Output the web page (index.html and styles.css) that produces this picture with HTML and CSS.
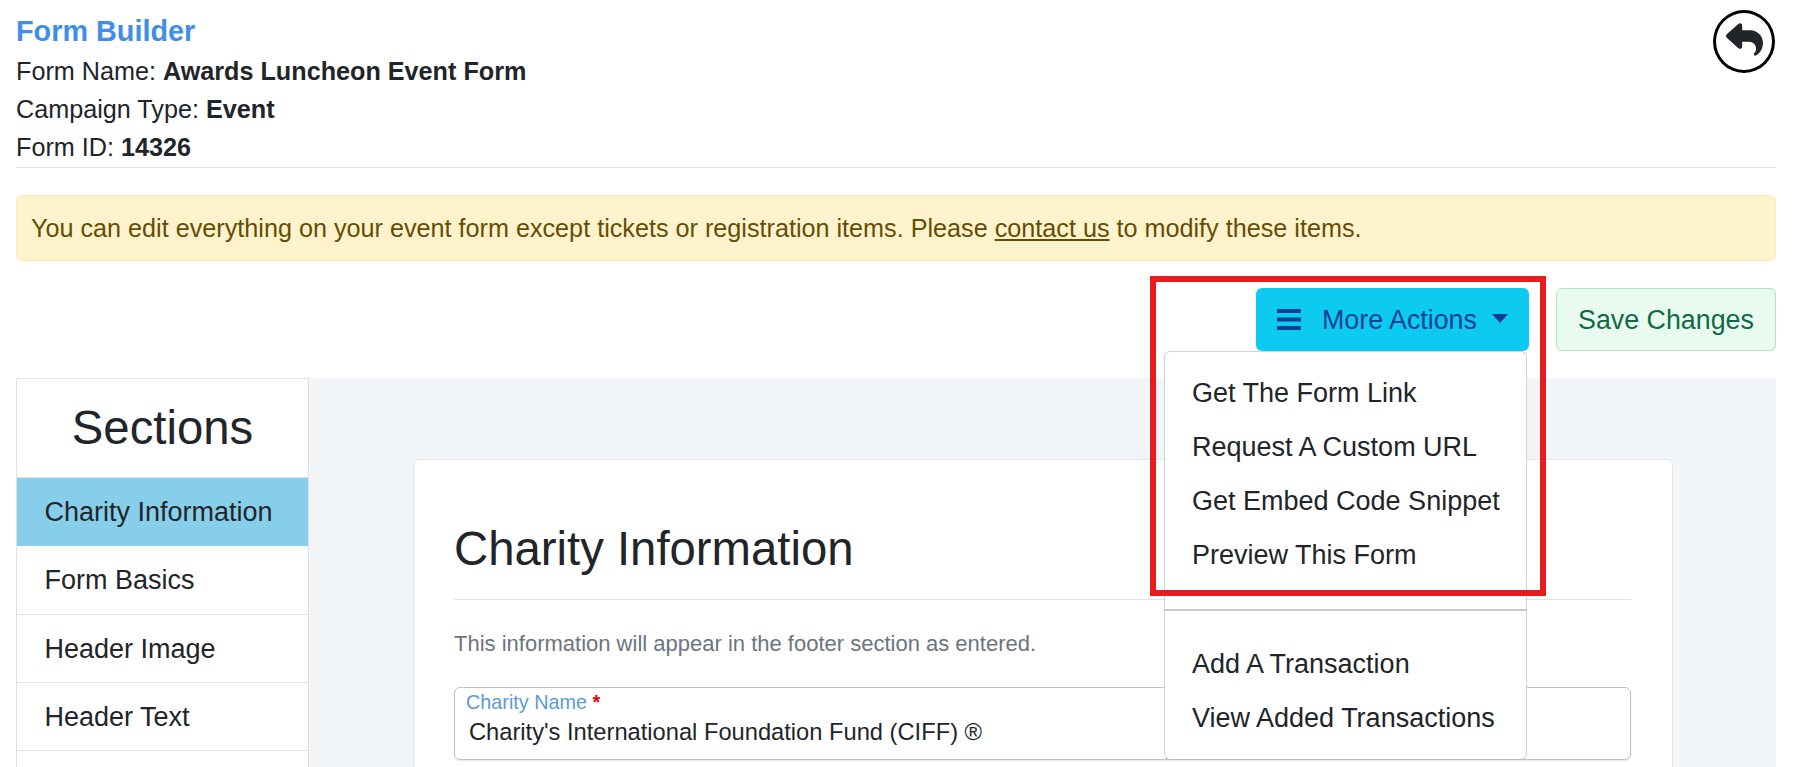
FILE: index.html
```html
<!DOCTYPE html>
<html lang="en">
<head>
    <meta charset="UTF-8">
    <meta name="viewport" content="width=device-width, initial-scale=1.0">
    <title>Form Builder</title>
    <link rel="stylesheet" href="styles.css">
</head>
<body>

<div class="page">
    <header class="form-header">
        <div class="form-info">
            <h1>Form Builder</h1>
            <p>Form Name: <strong>Awards Luncheon Event Form</strong></p>
            <p>Campaign Type: <strong>Event</strong></p>
            <p>Form ID: <strong>14326</strong></p>
        </div>
        <a class="back-link" href="#" aria-label="Back">
            <svg viewBox="0 0 512 512" width="37" height="37"><path d="M205 34.8c11.5 5.1 19 16.6 19 29.2v64H336c97.2 0 176 78.8 176 176c0 113.3-81.5 163.9-100.2 174.1c-2.5 1.4-5.3 1.9-8.1 1.9c-10.9 0-19.7-8.9-19.7-19.7c0-7.5 4.3-14.4 9.8-19.5c9.4-8.8 22.2-26.4 22.2-56.7c0-53-43-96-96-96H224v64c0 12.6-7.4 24.1-19 29.2s-25 3-34.4-5.4l-160-144C3.9 225.7 0 217.1 0 208s3.9-17.7 10.6-23.8l160-144c9.4-8.5 22.9-10.6 34.4-5.4z"/></svg>
        </a>
    </header>

    <div class="alert">You can edit everything on your event form except tickets or registration items. Please <a href="#">contact us</a> to modify these items.</div>

    <div class="actions">
        <div class="dropdown">
            <button class="btn-more">
                <svg class="bars" viewBox="0 0 24 21" width="24" height="21"><rect width="24" height="4" y="0"/><rect width="24" height="4" y="8.5"/><rect width="24" height="4" y="17"/></svg>
                <span>More Actions</span>
                <span class="caret"></span>
            </button>
            <div class="menu">
                <a href="#">Get The Form Link</a>
                <a href="#">Request A Custom URL</a>
                <a href="#">Get Embed Code Snippet</a>
                <a href="#">Preview This Form</a>
                <hr>
                <a href="#">Add A Transaction</a>
                <a href="#">View Added Transactions</a>
            </div>
            <div class="highlight"></div>
        </div>
        <button class="btn-save">Save Changes</button>
    </div>

    <div class="builder">
        <nav class="sidebar">
            <h2>Sections</h2>
            <a class="active" href="#">Charity Information</a>
            <a href="#">Form Basics</a>
            <a href="#">Header Image</a>
            <a href="#">Header Text</a>
        </nav>
        <main class="panel">
            <section class="card">
                <h2>Charity Information</h2>
                <p class="hint">This information will appear in the footer section as entered.</p>
                <div class="field">
                    <label for="charityName">Charity Name <span>*</span></label>
                    <input id="charityName" type="text" value="Charity's International Foundation Fund (CIFF) ®">
                </div>
            </section>
        </main>
    </div>
</div>

</body>
</html>
```

FILE: styles.css
```css
html, body {
    margin: 0;
    height: 100%;
    overflow: hidden;
}
body {
    font-family: "Liberation Sans", Arial, sans-serif;
    color: #212529;
    background-color: #fff;
}
a {
    color: inherit;
    text-decoration: none;
}
.page {
    display: flex;
    flex-direction: column;
    height: 100%;
    padding: 10px 19px 0 16px;
    box-sizing: border-box;
}

/* header */
.form-header {
    display: flex;
    justify-content: space-between;
    align-items: flex-start;
    height: 157px;
    border-bottom: 1px solid #dee2e6;
    flex-shrink: 0;
}
.form-info h1 {
    margin: 0;
    height: 42px;
    font-size: 28.8px;
    line-height: 42px;
    font-weight: bold;
    color: #3f8fe8;
}
.form-info p {
    margin: 0;
    font-size: 25.2px;
    line-height: 38px;
}
.back-link {
    display: flex;
    align-items: center;
    justify-content: center;
    width: 62px;
    height: 63px;
    box-sizing: border-box;
    margin-right: 1px;
    padding-bottom: 4px;
    border: 3px solid #000;
    border-radius: 50%;
}
.back-link svg {
    fill: #212529;
}

/* alert */
.alert {
    margin-top: 27px;
    height: 66px;
    box-sizing: border-box;
    padding: 0 14px;
    flex-shrink: 0;
    display: flex;
    align-items: center;
    white-space: pre-wrap;
    font-size: 25.2px;
    color: #664d03;
    background-color: #fff3cd;
    border: 1px solid #ffecb5;
    border-radius: 6px;
}
.alert a {
    text-decoration: underline;
}

/* action buttons */
.actions {
    display: flex;
    justify-content: flex-end;
    gap: 27px;
    margin-top: 27px;
    flex-shrink: 0;
}
.dropdown {
    position: relative;
}
.btn-more, .btn-save {
    height: 63px;
    box-sizing: border-box;
    font-family: inherit;
    font-size: 26.8px;
    border-radius: 6px;
    cursor: pointer;
}
.btn-more {
    display: flex;
    align-items: center;
    width: 273px;
    padding: 1px 0 0 21px;
    color: #0a3f92;
    background-color: #0dcaf0;
    border: none;
}
.bars {
    fill: #0a3f92;
    margin: -1px 21px 0 0;
}
.caret {
    width: 0;
    height: 0;
    margin: -3px 0 0 15px;
    border-top: 9px solid #0a3f92;
    border-left: 8px solid transparent;
    border-right: 8px solid transparent;
}
.btn-save {
    width: 220px;
    padding: 1px 0 0;
    color: #0f6b45;
    background-color: #e9fbf1;
    border: 1px solid #a9e6c8;
}
.menu {
    position: absolute;
    z-index: 5;
    top: 63px;
    left: -92px;
    width: 363px;
    height: 409px;
    box-sizing: border-box;
    padding: 14px 0 0;
    background-color: #fff;
    border: 1px solid #d0d3d6;
    border-bottom-color: #bcbcbc;
    border-radius: 6px;
}
.menu a {
    display: block;
    height: 54px;
    padding-left: 27px;
    font-size: 27px;
    line-height: 54px;
}
.menu hr {
    margin: 27px 0 26px;
    border: none;
    border-top: 2px solid #c8c8c8;
}
.highlight {
    position: absolute;
    z-index: 6;
    top: -12px;
    left: -106px;
    width: 396px;
    height: 320px;
    box-sizing: border-box;
    border: 6px solid #e81c1f;
    pointer-events: none;
}

/* builder area */
.builder {
    display: flex;
    flex: 1;
    min-height: 0;
    margin-top: 27px;
}
.sidebar {
    display: flex;
    flex-direction: column;
    width: 293px;
    box-sizing: border-box;
    flex-shrink: 0;
    border: 1px solid #dee2e6;
    border-bottom: none;
}
.sidebar h2 {
    margin: 0;
    height: 99px;
    font-size: 47.3px;
    font-weight: normal;
    line-height: 98px;
    text-align: center;
    border-bottom: 1px solid #dee2e6;
    box-sizing: border-box;
}
.sidebar a {
    height: 68.3px;
    box-sizing: border-box;
    padding-left: 27.5px;
    font-size: 27px;
    line-height: 69px;
    border-bottom: 1px solid #dee2e6;
}
.sidebar a.active {
    background-color: #87ceeb;
    border-bottom-color: #87ceeb;
}
.panel {
    flex: 1;
    padding: 81px 103px 0 104px;
    background-color: #f3f6f9;
}
.card {
    height: 400px;
    box-sizing: border-box;
    padding: 0 41px 0 40px;
    background-color: #fff;
    border: 1px solid #e3e6ea;
    border-radius: 6px;
}
.card h2 {
    margin: 0;
    height: 140px;
    box-sizing: border-box;
    padding-top: 61px;
    font-size: 47.3px;
    font-weight: normal;
    line-height: 56px;
    border-bottom: 1px solid #dee2e6;
}
.hint {
    margin: 0;
    height: 87px;
    padding-top: 31px;
    box-sizing: border-box;
    font-size: 22px;
    line-height: 26px;
    color: #6c757d;
}
.field {
    height: 73px;
    box-sizing: border-box;
    padding: 2px 14px 0 11px;
    border: 1px solid #bfc3c7;
    border-radius: 6px;
    box-shadow: 0 1px 2px rgba(0, 0, 0, 0.1);
}
.field label {
    display: block;
    font-size: 19.8px;
    line-height: 24px;
    color: #5b9bd5;
}
.field label span {
    font-weight: bold;
    color: #e00000;
}
.field input {
    display: block;
    width: 100%;
    margin: 3px 0 0;
    padding: 0 0 0 3px;
    box-sizing: border-box;
    font-family: inherit;
    font-size: 23.7px;
    line-height: 30px;
    color: #212529;
    border: none;
    outline: none;
    background: transparent;
}
```
